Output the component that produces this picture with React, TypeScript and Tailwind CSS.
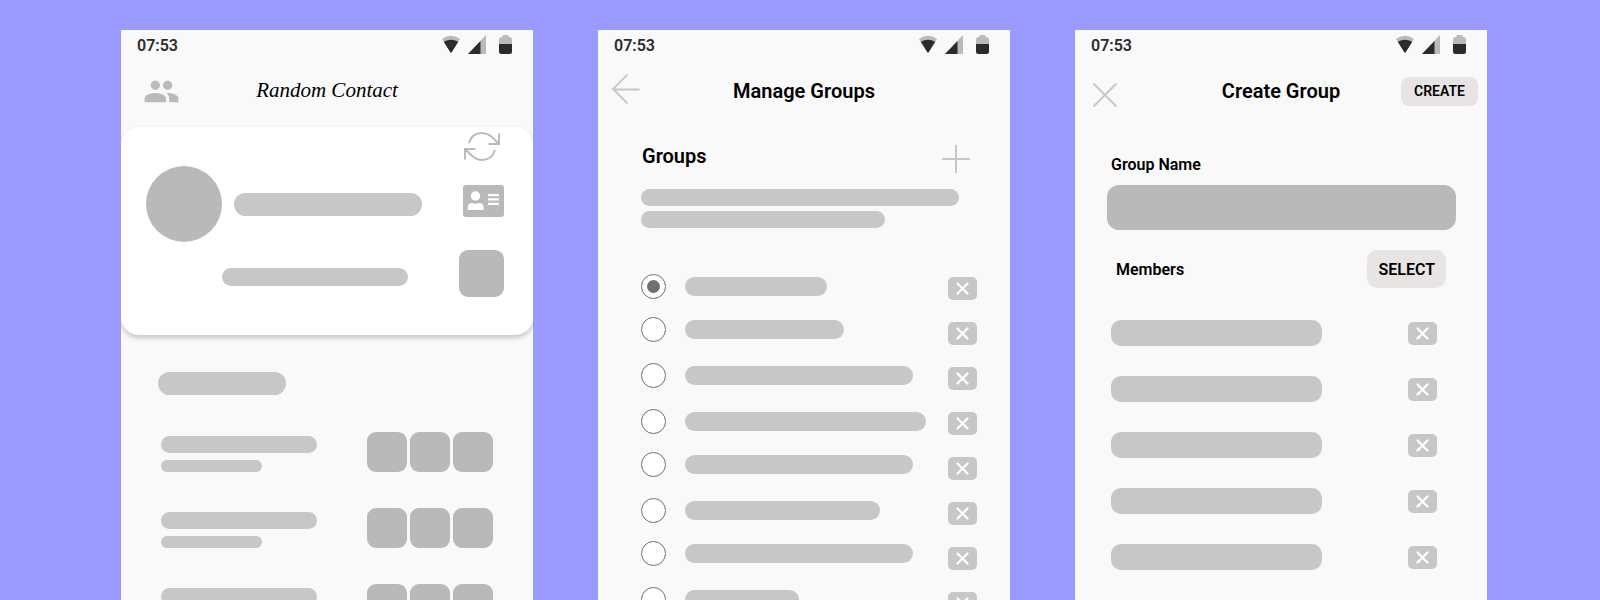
import React from "react";
import { MdPeople } from "react-icons/md";

const members = ["Member 1", "Member 2", "Member 3", "Member 4", "Member 5"];

const groups = [
  { bar: "w-[142px]", row: "h-[43px]" },
  { bar: "w-[159px]", row: "h-[46px]" },
  { bar: "w-[228px]", row: "h-[46px]" },
  { bar: "w-[241px]", row: "h-[43px]" },
  { bar: "w-[228px]", row: "h-[46px]" },
  { bar: "w-[195px]", row: "h-[43px]" },
  { bar: "w-[228px]", row: "h-[46px]" },
  { bar: "w-[114px]", row: "h-[43px]" },
];

function StatusBar() {
  return (
    <div className="flex h-8 shrink-0 items-center justify-between pr-[21px] pl-4">
      <time className="text-base font-semibold text-[#2b2b2b]">07:53</time>
      <div className="flex items-center pb-1">
        <svg className="mr-2 h-[18px] w-[18px]" viewBox="0 0 18 18" aria-hidden="true">
          <path d="M0 4Q9-2.500 18 4L9.500 17.500H8.500Z" fill="#bababa" />
          <path d="M1.800 6.700Q9 2.600 16.200 6.700L9.500 17.500H8.500Z" fill="#2b2b2b" />
        </svg>
        <svg className="mr-[13px] h-[19px] w-[18px]" viewBox="0 0 18 19" aria-hidden="true">
          <path d="M0 19L18 0V19Z" fill="#bababa" />
          <path d="M0 19L12.500 6V19Z" fill="#2b2b2b" />
        </svg>
        <svg className="h-[19px] w-[13px]" viewBox="0 0 13 19" aria-hidden="true">
          <path d="M4.500 0h4q1 0 1 1v1h.5q3 0 3 3v4H0V5q0-3 3-3h.5V1q0-1 1-1Z" fill="#bababa" />
          <path d="M0 9h13v7.500q0 2.500-2.500 2.500h-8Q0 19 0 16.500Z" fill="#2b2b2b" />
        </svg>
      </div>
    </div>
  );
}

function Phone({ children }: { children: React.ReactNode }) {
  return (
    <section className="flex min-w-0 flex-1 flex-col overflow-hidden bg-[#f9f9f9]">
      <StatusBar />
      {children}
    </section>
  );
}

function Header({ left, title, right }: { left: React.ReactNode; title: React.ReactNode; right?: React.ReactNode }) {
  return (
    <header className="mb-0.5 grid h-[58px] shrink-0 grid-cols-[1fr_auto_1fr] items-center">
      <div className="flex justify-start">{left}</div>
      {title}
      <div className="flex justify-end pr-[9px]">{right}</div>
    </header>
  );
}

function DeleteButton({ label }: { label: string }) {
  return (
    <button
      type="button"
      aria-label={label}
      className="flex h-[23px] w-[29px] shrink-0 items-center justify-center rounded-[5px] bg-[#c7c7c7]"
    >
      <svg className="size-[13px]" viewBox="0 0 13 13" aria-hidden="true">
        <path d="M1.500 1.500L11.500 11.500M11.500 1.500L1.500 11.500" stroke="#fff" strokeWidth="2.300" strokeLinecap="round" />
      </svg>
    </button>
  );
}

function HomeScreen() {
  return (
    <Phone>
      <Header
        left={
          <button type="button" aria-label="Groups" className="ml-[22px]">
            <MdPeople className="size-[37px] text-[#bababa]" />
          </button>
        }
        title={<h1 className="font-['Liberation_Serif',serif] text-[21px] text-black italic">Random Contact</h1>}
      />
      <div className="mt-[5px] flex h-[208px] shrink-0 justify-between rounded-[18px] bg-white pr-[29px] pl-[25px] shadow-[0_3px_5px_rgba(0,0,0,0.2)]">
        <div className="pt-[39px]">
          <div className="flex items-center gap-3">
            <div className="size-[76px] rounded-full bg-[#b9b9b9]" />
            <div className="h-[23px] w-[188px] rounded-full bg-[#c7c7c7]" />
          </div>
          <div className="mt-[26px] ml-[76px] h-[18px] w-[186px] rounded-full bg-[#c7c7c7]" />
        </div>
        <div className="flex flex-col items-end pt-[5px]">
          <button type="button" aria-label="Refresh" className="mr-1">
            <svg className="h-[29px] w-9" viewBox="0 0 36 29" fill="none" stroke="#bababa" strokeWidth="2" aria-hidden="true">
              <path d="M5 11C7 4.500 12 1 18 1C24 1 27 4 34.500 11.500M35 1.500V12H24.500" />
              <path d="M31 18C29 24.500 24 28 18 28C12 28 9 25 1.500 17.500M1 27.500V17H11.500" />
            </svg>
          </button>
          <button type="button" aria-label="Contact card" className="mt-6">
            <svg className="h-8 w-[41px]" viewBox="0 0 41 32" aria-hidden="true">
              <rect width="41" height="32" rx="3" fill="#b9b9b9" />
              <g fill="#fff">
                <circle cx="12.500" cy="11" r="4.700" />
                <path d="M4.700 25v-2q0-5 4.500-5q3.300 1.500 6.600 0q4.900 0 4.900 5v1q0 1-1 1Z" />
                <path d="M25 9h11v2.200H25ZM25 13.200h11v2.200H25ZM25 17.800h11v2.200H25Z" />
              </g>
            </svg>
          </button>
          <div className="mt-[33px] h-[47px] w-[45px] rounded-[9px] bg-[#b9b9b9]" />
        </div>
      </div>
      <div className="mt-[37px] ml-[37px] h-[23px] w-32 shrink-0 rounded-full bg-[#c7c7c7]" />
      <ul className="mt-[37px] flex flex-col gap-9 pr-10 pl-10">
        {[0, 1, 2].map((i) => (
          <li key={i} className="flex h-10 shrink-0 items-end justify-between">
            <div className="flex flex-col gap-[7px]">
              <div className="h-[17px] w-[156px] rounded-full bg-[#c7c7c7]" />
              <div className="h-3 w-[101px] rounded-full bg-[#c7c7c7]" />
            </div>
            <div className="flex gap-[3px]">
              <div className="size-10 rounded-[9px] bg-[#b9b9b9]" />
              <div className="size-10 rounded-[9px] bg-[#b9b9b9]" />
              <div className="size-10 rounded-[9px] bg-[#b9b9b9]" />
            </div>
          </li>
        ))}
      </ul>
    </Phone>
  );
}

function ManageScreen() {
  return (
    <Phone>
      <Header
        left={
          <button type="button" aria-label="Back" className="ml-3 pb-1">
            <svg className="h-[30px] w-[30px]" viewBox="0 0 30 30" fill="none" stroke="#c7c7c7" strokeWidth="1.800" aria-hidden="true">
              <path d="M17.500 .5L3 15L17.500 29.500M2.500 15.500H29.500" />
            </svg>
          </button>
        }
        title={<h1 className="text-xl font-semibold text-black">Manage Groups</h1>}
      />
      <div className="mt-[23px] flex h-7 shrink-0 items-start justify-between pr-10 pl-11">
        <h2 className="text-xl leading-[22px] font-semibold text-black">Groups</h2>
        <button type="button" aria-label="Add group">
          <svg className="size-7" viewBox="0 0 28 28" stroke="#c7c7c7" strokeWidth="2" aria-hidden="true">
            <path d="M14 0V28M0 14H28" />
          </svg>
        </button>
      </div>
      <div className="mt-4 flex shrink-0 flex-col gap-[5px] pl-[43px]">
        <div className="h-[17px] w-[318px] rounded-full bg-[#c7c7c7]" />
        <div className="h-[17px] w-[244px] rounded-full bg-[#c7c7c7]" />
      </div>
      <div className="mt-[46px] flex items-start justify-between pr-[33px] pl-[43px]">
        <div role="radiogroup" aria-label="Groups">
          {groups.map((g, i) => (
            <label key={i} className={`flex items-start gap-[19px] ${g.row}`}>
              <input
                type="radio"
                name="group"
                aria-label={`Group ${i + 1}`}
                defaultChecked={i === 0}
                className="grid size-[25px] shrink-0 appearance-none place-content-center rounded-full border border-[#707070] bg-white before:size-[13px] before:rounded-full checked:before:bg-[#707070]"
              />
              <span className={`mt-[3px] h-[19px] rounded-full bg-[#c7c7c7] ${g.bar}`} />
            </label>
          ))}
        </div>
        <div className="flex flex-col gap-[22px] pt-[3px]">
          {groups.map((_, i) => (
            <DeleteButton key={i} label={`Delete group ${i + 1}`} />
          ))}
        </div>
      </div>
    </Phone>
  );
}

function CreateScreen() {
  return (
    <Phone>
      <Header
        left={
          <button type="button" aria-label="Close" className="ml-[18px] pt-2">
            <svg className="size-6" viewBox="0 0 24 24" stroke="#c7c7c7" strokeWidth="1.800" strokeLinecap="round" aria-hidden="true">
              <path d="M1 1L23 23M23 1L1 23" />
            </svg>
          </button>
        }
        title={<h1 className="text-xl font-semibold text-black">Create Group</h1>}
        right={
          <button type="button" className="h-[29px] rounded-lg bg-[#e8e4e4] px-[13px] text-sm font-semibold text-black">
            CREATE
          </button>
        }
      />
      <div className="mt-[31px] flex shrink-0 flex-col pr-[31px] pl-8">
        <label htmlFor="group-name" className="pl-1 text-base leading-6 font-semibold text-black">
          Group Name
        </label>
        <input id="group-name" type="text" className="mt-2 h-[45px] w-full rounded-xl bg-[#b9b9b9] px-4 text-black" />
      </div>
      <div className="mt-5 flex h-[38px] shrink-0 items-center justify-between pr-[41px] pl-[41px]">
        <h2 className="pt-0.5 text-base font-semibold text-black">Members</h2>
        <button type="button" className="h-[38px] rounded-[10px] bg-[#e8e4e4] px-[11px] pt-0.5 text-base font-semibold text-black">
          SELECT
        </button>
      </div>
      <ul className="mt-8 flex flex-col gap-[30px] pr-[50px] pl-9">
        {members.map((m) => (
          <li key={m} className="flex h-[26px] shrink-0 items-center justify-between">
            <div className="h-[26px] w-[211px] rounded-[10px] bg-[#c7c7c7]" />
            <DeleteButton label={`Remove ${m}`} />
          </li>
        ))}
      </ul>
    </Phone>
  );
}

export default function App() {
  return (
    <main className="flex h-screen gap-[65px] overflow-hidden bg-[#9999ff] pt-[30px] pr-[113px] pl-[121px] font-['Roboto',sans-serif]">
      <HomeScreen />
      <ManageScreen />
      <CreateScreen />
    </main>
  );
}
